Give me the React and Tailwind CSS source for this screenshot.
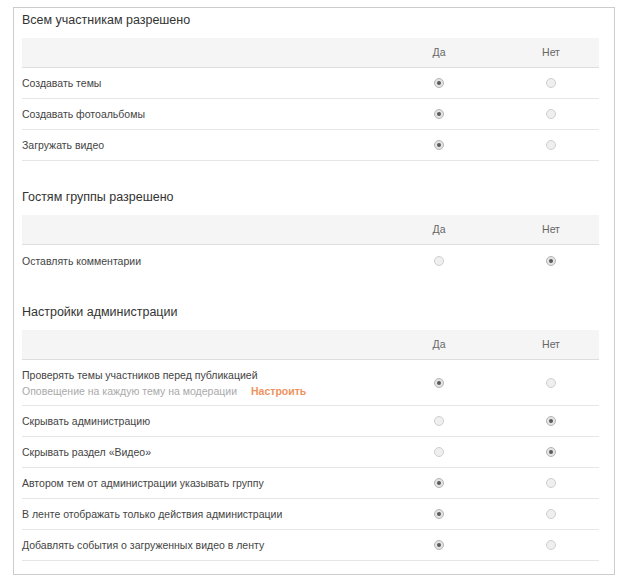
const sections = [
  {
    title: "Всем участникам разрешено",
    rows: [
      { label: "Создавать темы", value: "yes" },
      { label: "Создавать фотоальбомы", value: "yes" },
      { label: "Загружать видео", value: "yes" },
    ],
  },
  {
    title: "Гостям группы разрешено",
    noLastBorder: true,
    rows: [{ label: "Оставлять комментарии", value: "no" }],
  },
  {
    title: "Настройки администрации",
    rows: [
      {
        label: "Проверять темы участников перед публикацией",
        note: "Оповещение на каждую тему на модерации",
        link: "Настроить",
        value: "yes",
      },
      { label: "Скрывать администрацию", value: "no" },
      { label: "Скрывать раздел «Видео»", value: "no" },
      { label: "Автором тем от администрации указывать группу", value: "yes" },
      { label: "В ленте отображать только действия администрации", value: "yes" },
      { label: "Добавлять события о загруженных видео в ленту", value: "yes" },
    ],
  },
];

const Radio = ({ checked }) => (
  <span
    className={`flex items-center justify-center w-[10px] h-[10px] rounded-full border ${
      checked ? "border-[#b5b5b5] bg-[#e4e4e4]" : "border-[#cfcfcf] bg-[#efefef]"
    }`}
  >
    {checked && <span className="block w-[4px] h-[4px] rounded-full bg-[#5a5a5a]" />}
  </span>
);

const Section = ({ section }) => {
  return (
    <div>
      <div className="h-[30px] pt-[4px] text-[12.5px] leading-[16px] text-[#333]">{section.title}</div>
      <div className="grid grid-cols-[1fr_96px_96px] gap-x-[16px] h-[30px] items-center bg-[#f5f5f5] border-b border-[#dedede] text-[10.5px] text-[#666]">
        <div />
        <div className="text-center">Да</div>
        <div className="text-center">Нет</div>
      </div>
      {section.rows.map((row, i) => {
        const last = i === section.rows.length - 1;
        return (
          <div
            key={row.label}
            className={`grid grid-cols-[1fr_96px_96px] gap-x-[16px] items-center ${
              row.note ? "h-[46px]" : "h-[31px]"
            } ${last && section.noLastBorder ? "" : "border-b border-[#e6e6e6]"}`}
          >
            <div className="text-[10.5px] leading-[16px] text-[#444]">
              <div>{row.label}</div>
              {row.note && (
                <div className="text-[#aaa]">
                  {row.note}
                  <span className="ml-[14px] font-bold text-[#ee9360]">{row.link}</span>
                </div>
              )}
            </div>
            <div className="flex justify-center">
              <Radio checked={row.value === "yes"} />
            </div>
            <div className="flex justify-center">
              <Radio checked={row.value === "no"} />
            </div>
          </div>
        );
      })}
    </div>
  );
};

export default function App() {
  return (
    <div className="w-[629px] h-[584px] bg-white pt-[7px] pl-[13px]" style={{ fontFamily: '"Liberation Sans", Arial, sans-serif' }}>
      <div className="w-[602px] border border-[#cccccc] pl-[8px] pr-[15px] pb-[13px] flex flex-col gap-[24px]">
        {sections.map((s) => (
          <Section key={s.title} section={s} />
        ))}
      </div>
    </div>
  );
}
